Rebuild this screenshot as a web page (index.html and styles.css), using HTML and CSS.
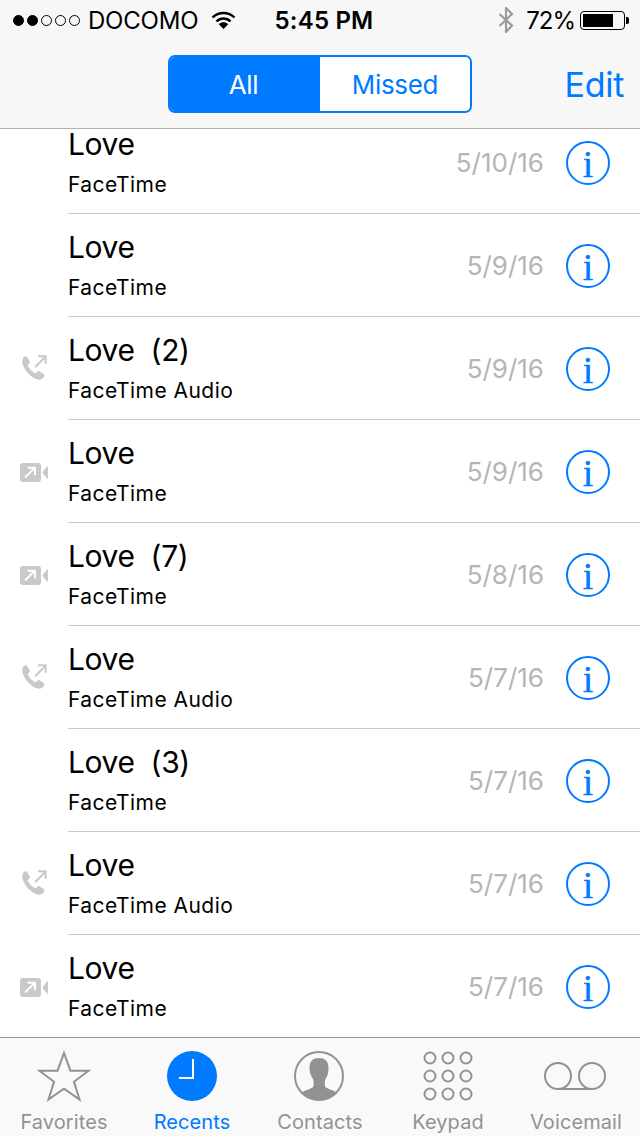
FILE: index.html
```html
<!DOCTYPE html>
<html lang="en">
<head>
    <meta charset="UTF-8">
    <meta name="viewport" content="width=device-width, initial-scale=1.0">
    <title>Recents</title>
    <link rel="stylesheet" href="styles.css">
</head>
<body>
    <svg class="defs" width="0" height="0">
        <symbol id="audio" viewBox="0 0 28 28">
            <path d="M5 3.5c1.4-.9 2.5-.8 3.2.4l1.9 3.2c.5 1 .3 1.8-.5 2.4l-1.3 1c.6 1.6 1.6 3 2.9 4.4 1.4 1.4 2.800 2.4 4.4 3l1.100-1.300c.7-.8 1.500-1 2.400-.4l3.100 2c1.100.7 1.200 1.800.3 3-1.300 1.800-3.100 2.600-5.200 2-3-.8-5.900-2.700-8.400-5.300C7 15.800 5 12.900 4 9.800 3.400 7.400 3.700 4.900 5 3.500z" fill="#c9c9c9"/>
            <path d="M15 12.500 24 3.300M17.500 2.800h6.700v6.700" fill="none" stroke="#c9c9c9" stroke-width="1.700"/>
        </symbol>
        <symbol id="video" viewBox="0 0 28 20">
            <rect x="0" y="0" width="21" height="19" rx="3" fill="#c9c9c9"/>
            <path d="M22.500 9 27 3.500c.4-.4 1-.2 1 .4v11.200c0 .6-.6.800-1 .4L22.500 10z" fill="#c9c9c9"/>
            <path d="M5 14.500 14.500 5M7.500 4.800H15v7.500" fill="none" stroke="#fff" stroke-width="2"/>
        </symbol>
    </svg>

    <div class="status-bar">
        <div class="status-left">
            <span class="signal">
                <i class="dot on"></i><i class="dot on"></i><i class="dot"></i><i class="dot"></i><i class="dot"></i>
            </span>
            <span class="carrier">DOCOMO</span>
            <svg class="wifi" width="26" height="20" viewBox="0 0 26 20">
                <path d="M1.500 7.500C7.800 1.500 17.200 1.500 23.500 7.500" fill="none" stroke="#000" stroke-width="2.400"/>
                <path d="M5.500 11.500C9.700 7.500 15.300 7.500 19.500 11.500" fill="none" stroke="#000" stroke-width="2.400"/>
                <path d="M12.500 19 7.800 14.300C10.700 11.700 14.300 11.700 17.200 14.300z" fill="#000"/>
            </svg>
        </div>
        <div class="status-time">5:45 PM</div>
        <div class="status-right">
            <svg class="bluetooth" width="16" height="26" viewBox="0 0 16 26">
                <path d="M1.500 7 14 18.500 8 25V1l6 6L1.500 19" fill="none" stroke="#9b9b9b" stroke-width="2.200"/>
            </svg>
            <span class="percent">72%</span>
            <span class="battery"><span class="battery-fill"></span></span>
            <span class="battery-tip"></span>
        </div>
    </div>

    <div class="nav-bar">
        <div class="segments">
            <div class="segment active">All</div>
            <div class="segment">Missed</div>
        </div>
        <div class="edit">Edit</div>
    </div>

    <div class="list">
        <div class="rows">
            <div class="row">
                <div class="row-icon"></div>
                <div class="row-body">
                    <div class="row-text"><div class="name">Love</div><div class="type">FaceTime</div></div>
                    <div class="date">5/10/16</div>
                    <div class="info">i</div>
                </div>
            </div>
            <div class="row">
                <div class="row-icon"></div>
                <div class="row-body">
                    <div class="row-text"><div class="name">Love</div><div class="type">FaceTime</div></div>
                    <div class="date">5/9/16</div>
                    <div class="info">i</div>
                </div>
            </div>
            <div class="row">
                <div class="row-icon"><svg class="ic-audio"><use href="#audio"/></svg></div>
                <div class="row-body">
                    <div class="row-text"><div class="name">Love&nbsp; (2)</div><div class="type">FaceTime Audio</div></div>
                    <div class="date">5/9/16</div>
                    <div class="info">i</div>
                </div>
            </div>
            <div class="row">
                <div class="row-icon"><svg class="ic-video"><use href="#video"/></svg></div>
                <div class="row-body">
                    <div class="row-text"><div class="name">Love</div><div class="type">FaceTime</div></div>
                    <div class="date">5/9/16</div>
                    <div class="info">i</div>
                </div>
            </div>
            <div class="row">
                <div class="row-icon"><svg class="ic-video"><use href="#video"/></svg></div>
                <div class="row-body">
                    <div class="row-text"><div class="name">Love&nbsp; (7)</div><div class="type">FaceTime</div></div>
                    <div class="date">5/8/16</div>
                    <div class="info">i</div>
                </div>
            </div>
            <div class="row">
                <div class="row-icon"><svg class="ic-audio"><use href="#audio"/></svg></div>
                <div class="row-body">
                    <div class="row-text"><div class="name">Love</div><div class="type">FaceTime Audio</div></div>
                    <div class="date">5/7/16</div>
                    <div class="info">i</div>
                </div>
            </div>
            <div class="row">
                <div class="row-icon"></div>
                <div class="row-body">
                    <div class="row-text"><div class="name">Love&nbsp; (3)</div><div class="type">FaceTime</div></div>
                    <div class="date">5/7/16</div>
                    <div class="info">i</div>
                </div>
            </div>
            <div class="row">
                <div class="row-icon"><svg class="ic-audio"><use href="#audio"/></svg></div>
                <div class="row-body">
                    <div class="row-text"><div class="name">Love</div><div class="type">FaceTime Audio</div></div>
                    <div class="date">5/7/16</div>
                    <div class="info">i</div>
                </div>
            </div>
            <div class="row">
                <div class="row-icon"><svg class="ic-video"><use href="#video"/></svg></div>
                <div class="row-body">
                    <div class="row-text"><div class="name">Love</div><div class="type">FaceTime</div></div>
                    <div class="date">5/7/16</div>
                    <div class="info">i</div>
                </div>
            </div>
        </div>
    </div>

    <div class="tab-bar">
        <div class="tab">
            <svg class="tab-icon" width="56" height="54" viewBox="0 0 56 54">
                <path d="M28 4 34.400 21.700H52.500L38 32.800 43.500 50.500 28 39.800 12.500 50.500 18 32.800 3.500 21.700H21.600z" fill="none" stroke="#929292" stroke-width="2"/>
            </svg>
            <div class="tab-label">Favorites</div>
        </div>
        <div class="tab current">
            <svg class="tab-icon" width="56" height="54" viewBox="0 0 56 54">
                <circle cx="28" cy="27" r="25" fill="#007aff"/>
                <path d="M29 10V29H15" fill="none" stroke="#fff" stroke-width="2"/>
            </svg>
            <div class="tab-label">Recents</div>
        </div>
        <div class="tab">
            <svg class="tab-icon" width="56" height="54" viewBox="0 0 56 54">
                <defs><clipPath id="face"><circle cx="27" cy="27" r="24"/></clipPath></defs>
                <circle cx="27" cy="27" r="24" fill="none" stroke="#929292" stroke-width="2"/>
                <path clip-path="url(#face)" d="M27 9c6 0 9.500 3 9.500 10 0 5-1 8-3 11-.8 1.500-1 6 0 8 1.500 2 8 3 12 6L45 52H9v-8c4-3 10.500-4 12-6 1-2 .8-6.500 0-8-2-3-3.500-6-3.500-11C17.500 12 21 9 27 9z" fill="#929292"/>
            </svg>
            <div class="tab-label">Contacts</div>
        </div>
        <div class="tab">
            <svg class="tab-icon" width="56" height="54" viewBox="0 0 56 54">
                <g fill="none" stroke="#929292" stroke-width="2">
                    <circle cx="10" cy="9" r="5.500"/><circle cx="28" cy="9" r="5.500"/><circle cx="46" cy="9" r="5.500"/>
                    <circle cx="10" cy="27" r="5.500"/><circle cx="28" cy="27" r="5.500"/><circle cx="46" cy="27" r="5.500"/>
                    <circle cx="10" cy="45" r="5.500"/><circle cx="28" cy="45" r="5.500"/><circle cx="46" cy="45" r="5.500"/>
                </g>
            </svg>
            <div class="tab-label">Keypad</div>
        </div>
        <div class="tab">
            <svg class="tab-icon" width="64" height="54" viewBox="0 0 64 54">
                <g fill="none" stroke="#929292" stroke-width="2">
                    <circle cx="14" cy="27" r="13"/><circle cx="48" cy="27" r="13"/>
                    <path d="M14 40H48"/>
                </g>
            </svg>
            <div class="tab-label">Voicemail</div>
        </div>
    </div>
</body>
</html>
```

FILE: styles.css
```css
*{
    box-sizing: border-box;
}
html,body{
    height: 100%;
}
body{
    margin: 0;
    padding: 0;
    display: flex;
    flex-direction: column;
    width: 640px;
    height: 1136px;
    overflow: hidden;
    background-color: #fff;
    font-family: Inter, "Liberation Sans", sans-serif;
    color: #000;
}
.defs{
    display: block;
    height: 0;
}

/* status bar */
.status-bar{
    height: 40px;
    flex: none;
    display: flex;
    align-items: center;
    justify-content: space-between;
    padding: 0 11px 0 13px;
    background-color: #f7f7f8;
    font-size: 24px;
}
.status-left{
    display: flex;
    align-items: center;
    width: 246px;
}
.signal{
    display: flex;
    gap: 3px;
}
.dot{
    width: 11px;
    height: 11px;
    border-radius: 50%;
    border: 1px solid #000;
}
.dot.on{
    background-color: #000;
}
.carrier{
    margin-left: 8px;
    letter-spacing: -0.2px;
}
.wifi{
    margin-left: 13px;
}
.status-time{
    font-weight: 600;
    letter-spacing: 0.2px;
}
.status-right{
    display: flex;
    align-items: center;
    justify-content: flex-end;
    width: 240px;
}
.percent{
    margin-left: 12px;
    letter-spacing: -1px;
}
.battery{
    width: 45px;
    height: 19px;
    margin-left: 5px;
    border: 1px solid #000;
    border-radius: 4px;
    padding: 2px;
    display: block;
}
.battery-fill{
    display: block;
    width: 30px;
    height: 13px;
    background-color: #000;
}
.battery-tip{
    width: 3px;
    height: 7px;
    background-color: #000;
    border-radius: 0 2px 2px 0;
    margin-left: 1px;
}

/* nav */
.nav-bar{
    height: 89px;
    flex: none;
    display: flex;
    justify-content: center;
    padding-top: 15px;
    position: relative;
    background-color: #f7f7f8;
    border-bottom: 1px solid #b2b2b2;
}
.segments{
    width: 304px;
    height: 58px;
    display: flex;
    border: 2px solid #007aff;
    border-radius: 7px;
    overflow: hidden;
    font-size: 26px;
    letter-spacing: -0.3px;
    color: #007aff;
}
.segment{
    flex: 1;
    display: flex;
    align-items: center;
    justify-content: center;
    background-color: #fff;
}
.segment.active{
    flex: none;
    width: 150px;
    padding-right: 3px;
    background-color: #007aff;
    color: #fff;
}
.edit{
    position: absolute;
    right: 16px;
    top: 24px;
    font-size: 34px;
    letter-spacing: -0.3px;
    color: #007aff;
}

/* call list */
.list{
    flex: 1;
    min-height: 0;
    overflow: hidden;
}
.rows{
    margin-top: -18px;
}
.row{
    height: 103px;
    display: flex;
}
.row-icon{
    width: 68px;
    flex: none;
    display: flex;
    align-items: center;
    padding-left: 18px;
}
.ic-audio{
    width: 32px;
    height: 32px;
}
.ic-video{
    width: 28px;
    height: 20px;
    margin-left: 2px;
    margin-top: 2px;
}
.row-body{
    flex: 1;
    display: flex;
    align-items: center;
    padding-right: 30px;
    border-bottom: 1px solid #c8c7cc;
}
.row-text{
    flex: 1;
    padding-top: 2px;
}
.name{
    font-size: 30px;
    line-height: 28px;
    letter-spacing: -0.4px;
    margin-top: 2px;
}
.type{
    font-size: 21px;
    line-height: 26px;
    letter-spacing: 0.45px;
    margin-top: 14px;
}
.date{
    font-size: 26px;
    color: #b5b5b5;
    margin-right: 22px;
}
.info{
    width: 44px;
    height: 44px;
    margin-top: 2px;
    border: 2px solid #007aff;
    border-radius: 50%;
    color: #007aff;
    font-family: "Liberation Serif", serif;
    font-size: 38px;
    line-height: 42px;
    text-align: center;
    -webkit-text-stroke: 0.4px #007aff;
}

/* tabs */
.tab-bar{
    height: 99px;
    flex: none;
    display: flex;
    background-color: #f9f9f9;
    border-top: 1px solid #929292;
}
.tab{
    flex: 1;
    display: flex;
    flex-direction: column;
    align-items: center;
    padding-top: 11px;
    color: #929292;
    font-size: 20px;
    letter-spacing: 0.1px;
}
.tab.current{
    color: #007aff;
}
.tab-icon{
    display: block;
}
.tab-label{
    margin-top: 7px;
    line-height: 24px;
}
```
